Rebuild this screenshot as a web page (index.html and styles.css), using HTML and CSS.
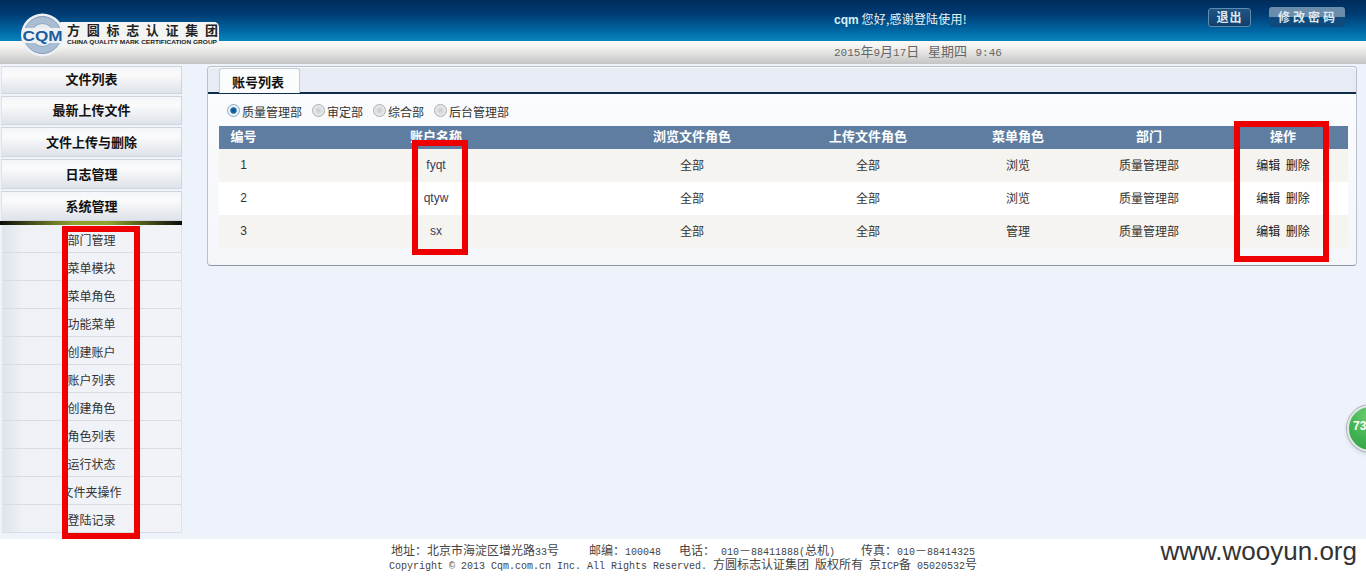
FILE: index.html
```html
<!DOCTYPE html>
<html lang="zh">
<head>
<meta charset="utf-8">
<title>账户列表</title>
<link rel="stylesheet" href="styles.css">
</head>
<body>
<div class="page">
  <header class="header">
    <div class="logo">
      <svg width="198" height="44" viewBox="0 0 198 44">
        <rect x="36" y="9" width="162" height="25" rx="5" fill="#f4f5f3"/>
        <circle cx="21.5" cy="22" r="21.5" fill="#eef1f4"/>
        <circle cx="21.5" cy="22" r="18.5" fill="#a9bdd4" stroke="#7f9aba" stroke-width="1"/>
        <circle cx="21.5" cy="22" r="11.5" fill="#e6ecf2" stroke="#8aa3bf" stroke-width="1"/>
        <rect x="1" y="15" width="41" height="15" fill="#eef1f4"/>
        <text x="21.5" y="28" class="logo-cqm" text-anchor="middle" textLength="40" lengthAdjust="spacingAndGlyphs">CQM</text>
        <text x="46" y="22" class="logo-cn" textLength="151">方圆标志认证集团</text>
        <text x="46" y="31" class="logo-en" textLength="150" lengthAdjust="spacingAndGlyphs">CHINA QUALITY MARK CERTIFICATION GROUP</text>
      </svg>
    </div>
    <div class="header-top">
      <div class="welcome"><b>cqm</b> 您好,感谢登陆使用!</div>
      <div class="actions">
        <a class="btn btn-exit">退出</a>
        <a class="btn btn-pass">修改密码</a>
      </div>
    </div>
    <div class="header-sub">
      <div class="date"><span class="lat">2015</span>年<span class="lat">9</span>月<span class="lat">17</span>日<span class="lat sp"> </span>星期四<span class="lat sp"> 9:46</span></div>
    </div>
  </header>

  <main class="main">
    <nav class="sidebar">
      <a class="nav-item nav-a">文件列表</a>
      <a class="nav-item nav-b">最新上传文件</a>
      <a class="nav-item">文件上传与删除</a>
      <a class="nav-item">日志管理</a>
      <a class="nav-item">系统管理</a>
      <div class="nav-bar"></div>
      <ul class="sub-list">
        <li>部门管理</li>
        <li>菜单模块</li>
        <li>菜单角色</li>
        <li>功能菜单</li>
        <li>创建账户</li>
        <li>账户列表</li>
        <li>创建角色</li>
        <li>角色列表</li>
        <li>运行状态</li>
        <li>文件夹操作</li>
        <li>登陆记录</li>
      </ul>
    </nav>

    <section class="panel">
      <div class="tabs"><span class="tab">账号列表</span></div>
      <div class="radios">
        <label class="radio"><i class="dot dot-on"></i>质量管理部</label>
        <label class="radio"><i class="dot"></i>审定部</label>
        <label class="radio"><i class="dot"></i>综合部</label>
        <label class="radio"><i class="dot"></i>后台管理部</label>
      </div>
      <table class="grid">
        <colgroup>
          <col class="c1"><col class="c2"><col class="c3"><col class="c4"><col class="c5"><col class="c6"><col class="c7">
        </colgroup>
        <thead>
          <tr><th>编号</th><th>账户名称</th><th>浏览文件角色</th><th>上传文件角色</th><th>菜单角色</th><th>部门</th><th>操作</th></tr>
        </thead>
        <tbody>
          <tr><td>1</td><td class="name">fyqt</td><td>全部</td><td>全部</td><td>浏览</td><td>质量管理部</td><td class="ops">编辑&nbsp;&nbsp;删除</td></tr>
          <tr><td>2</td><td class="name">qtyw</td><td>全部</td><td>全部</td><td>浏览</td><td>质量管理部</td><td class="ops">编辑&nbsp;&nbsp;删除</td></tr>
          <tr><td>3</td><td class="name">sx</td><td>全部</td><td>全部</td><td>管理</td><td>质量管理部</td><td class="ops">编辑&nbsp;&nbsp;删除</td></tr>
        </tbody>
      </table>
    </section>
  </main>

  <footer class="footer">
    <div class="foot-1">
      <span>地址：北京市海淀区增光路<span class="lat">33</span>号</span>
      <span class="g30">邮编：<span class="lat">100048</span></span>
      <span class="g18">电话：<span class="lat"> 010</span>－<span class="lat">88411888(</span>总机<span class="lat">)</span></span>
      <span class="g26">传真：<span class="lat">010</span>－<span class="lat">88414325</span></span>
    </div>
    <div class="foot-2"><span class="lat">Copyright © 2013 Cqm.com.cn Inc. All Rights Reserved. </span>方圆标志认证集团<span class="lat"> </span>版权所有<span class="lat"> </span>京<span class="lat">ICP</span>备<span class="lat"> 05020532</span>号</div>
  </footer>

  <div class="mark mark-side"></div>
  <div class="mark mark-name"></div>
  <div class="mark mark-ops"></div>
  <div class="bubble">73</div>
  <div class="watermark">www.wooyun.org</div>
</div>
</body>
</html>
```
FILE: styles.css
```css
* { box-sizing: border-box; }
html, body { margin: 0; padding: 0; }
body {
  font-family: "Noto Sans CJK SC", "Liberation Sans", sans-serif;
  font-size: 12px;
  color: #333;
  background: #fff;
}
.page {
  position: relative;
  width: 1366px;
  height: 579px;
  overflow: hidden;
  display: flex;
  flex-direction: column;
}
.lat { font-family: "Liberation Mono", monospace; font-size: 10px; line-height: 0; white-space: pre; }

/* header */
.header { position: relative; height: 64px; flex: none; }
.header-top {
  height: 41px;
  background: linear-gradient(#002c5c 0%, #003c74 35%, #0068a4 75%, #0a84bd 100%);
  display: flex;
  justify-content: space-between;
  padding: 7px 21px 0 834px;
}
.welcome { color: #e8f2f8; font-size: 12px; line-height: 24px; white-space: nowrap; letter-spacing: .2px; }
.welcome b { font-family: "Liberation Sans", sans-serif; color: #d8f0f6; letter-spacing: 0; }
.actions { display: flex; gap: 18px; align-items: flex-start; }
.btn {
  display: block;
  color: #dfe8f0;
  font-weight: 700;
  text-align: center;
  border-radius: 3px;
  font-size: 12px;
}
.btn-exit {
  width: 43px;
  height: 19px;
  line-height: 15px;
  margin-top: 1px;
  letter-spacing: 1px;
  background: linear-gradient(#1f5484, #123f6d);
  border: 1px solid #5f8cad;
}
.btn-pass {
  width: 76px;
  height: 20px;
  line-height: 20px;
  letter-spacing: 3px;
  padding-left: 2px;
  background: linear-gradient(#6b8dab 0%, #6b8dab 50%, #0f4a7c 50%, #0f4a7c 100%);
}
.header-sub {
  height: 23px;
  background: linear-gradient(#fbfcfa 0%, #f0f0ee 30%, #c4c4c4 100%);
  padding-left: 834px;
}
.date { font-size: 13px; line-height: 20px; color: #666; white-space: nowrap; }
.date .lat { font-size: 11px; }
.date .sp { word-spacing: 2px; }
.logo { position: absolute; left: 21px; top: 13px; width: 198px; height: 44px; }
.logo-cqm { font: 700 15px "Liberation Sans", sans-serif; fill: #1c5ea0; }
.logo-cn { font: 700 13px "Noto Sans CJK SC", sans-serif; fill: #222; }
.logo-en { font: 700 6px "Liberation Sans", sans-serif; fill: #222; }

/* main */
.main {
  flex: 1;
  display: flex;
  align-items: flex-start;
  gap: 25px;
  background: #eef2fb;
  padding: 2px 9px 0 0;
  min-height: 0;
}
.sidebar { width: 182px; flex: none; }
.nav-item {
  display: block;
  height: 30px;
  margin: 0 0 2px 1px;
  text-align: center;
  line-height: 28px;
  font-size: 13px;
  font-weight: 700;
  color: #111;
  background: linear-gradient(#f3f5f8 0%, #fbfbfb 30%, #e4e7ed 85%, #dfe3ea 100%);
  border: 1px solid #cfd4de;
  border-left-color: #dfe3ea;
}
.nav-a { height: 28px; line-height: 24px; }
.nav-b { height: 29px; line-height: 26px; }
.nav-bar {
  height: 4px;
  margin-top: -2px;
  background: linear-gradient(90deg, #0a0a0a 0%, #8fa02c 40%, #8fa02c 60%, #0a0a0a 100%);
}
.sub-list { list-style: none; margin: 0; padding: 0; }
.sub-list li {
  height: 28px;
  padding-top: 2px;
  line-height: 26px;
  margin-left: 2px;
  text-align: center;
  font-size: 12px;
  color: #333;
  background: linear-gradient(90deg, #dfe3ea 0%, #eef1f6 12%, #f1f3f7 100%);
  border-bottom: 1px solid #d9dce3;
  border-right: 1px solid #dfe2e8;
}

/* panel */
.panel {
  flex: 1;
  height: 200px;
  background: linear-gradient(#fbfcfd, #f4f6fa);
  border: 1px solid #b9c0cb;
  border-bottom-color: #8f959e;
  border-radius: 4px;
  padding: 0 8px 0 11px;
}
.tabs {
  height: 26px;
  margin: 0 -8px 0 -11px;
  padding-left: 11px;
  border-bottom: 2px solid #0f2c4d;
  background: #e7ecf4;
  border-radius: 4px 4px 0 0;
}
.tab {
  display: block;
  width: 81px;
  height: 25px;
  margin-top: 1px;
  padding-right: 3px;
  background: #fbfcfd;
  border: 1px solid #c6ccd6;
  border-bottom: 0;
  border-radius: 3px 3px 0 0;
  text-align: center;
  line-height: 25px;
  font-size: 13px;
  font-weight: 700;
  color: #111;
  position: relative;
}
.radios {
  height: 32px;
  display: flex;
  gap: 10px;
  align-items: center;
  padding: 3px 0 0 8px;
}
.radio { display: flex; align-items: center; gap: 2px; color: #333; line-height: 14px; }
.dot {
  width: 13px;
  height: 13px;
  margin-top: -3px;
  border-radius: 50%;
  border: 1px solid #a8adb2;
  background: radial-gradient(circle at 50% 50%, #c8cbcd 0, #dfe1e3 45%, #f8f8f8 100%);
}
.dot-on { background: radial-gradient(circle at 50% 50%, #0b4f86 0, #1a6aa6 35%, #e4eef6 48%, #fff 100%); border-color: #8ea6bb; }
.grid { width: 1129px; border-collapse: collapse; table-layout: fixed; }
.c1 { width: 49px; }
.c2 { width: 336px; }
.c3, .c4 { width: 176px; }
.c5 { width: 124px; }
.c6 { width: 138px; }
.c7 { width: 130px; }
.grid th {
  height: 23px;
  padding: 0 0 3px;
  background: #5e7da0;
  color: #fff;
  font-size: 13px;
  font-weight: 700;
  text-align: center;
  line-height: 20px;
}
.grid td {
  height: 33px;
  padding: 0 0 1px;
  text-align: center;
  font-size: 12px;
  line-height: 16px;
  color: #333;
}
.grid td:first-child, .grid td.name { font-family: "Liberation Sans", sans-serif; }
.grid td.name { color: #3a3a55; }
.grid td.ops { color: #222; }
.grid tbody tr:nth-child(odd) { background: #f6f4f1; }
.grid tbody tr:nth-child(even) { background: #fff; }

/* footer */
.footer { height: 40px; flex: none; background: #fff; padding-top: 4px; color: #444; font-size: 12px; line-height: 14px; }
.foot-1 { display: flex; justify-content: center; white-space: nowrap; }
.foot-2 { text-align: center; white-space: nowrap; }
.g30 { margin-left: 30px; }
.g18 { margin-left: 18px; }
.g26 { margin-left: 26px; }

/* overlays */
.mark { position: absolute; border: 6px solid #ee0000; }
.mark-side { left: 62px; top: 226px; width: 78px; height: 313px; }
.mark-name { left: 412px; top: 140px; width: 56px; height: 115px; }
.mark-ops { left: 1234px; top: 121px; width: 95px; height: 141px; }
.bubble {
  position: absolute;
  left: 1347px;
  top: 405px;
  width: 47px;
  height: 47px;
  border-radius: 50%;
  background: radial-gradient(circle at 50% 20%, #6fd06f, #3fb050 60%, #35a045);
  border: 2px solid #dfe8e4;
  box-shadow: 0 0 0 1px #a9b3b5, 0 2px 5px rgba(0,0,0,.15);
  color: #fff;
  font: 700 12px/39px "Liberation Sans", sans-serif;
  padding-left: 4px;
}
.watermark {
  position: absolute;
  right: 9px;
  top: 536px;
  font: 26px/30px "Liberation Sans", sans-serif;
  color: #333;
}
```
